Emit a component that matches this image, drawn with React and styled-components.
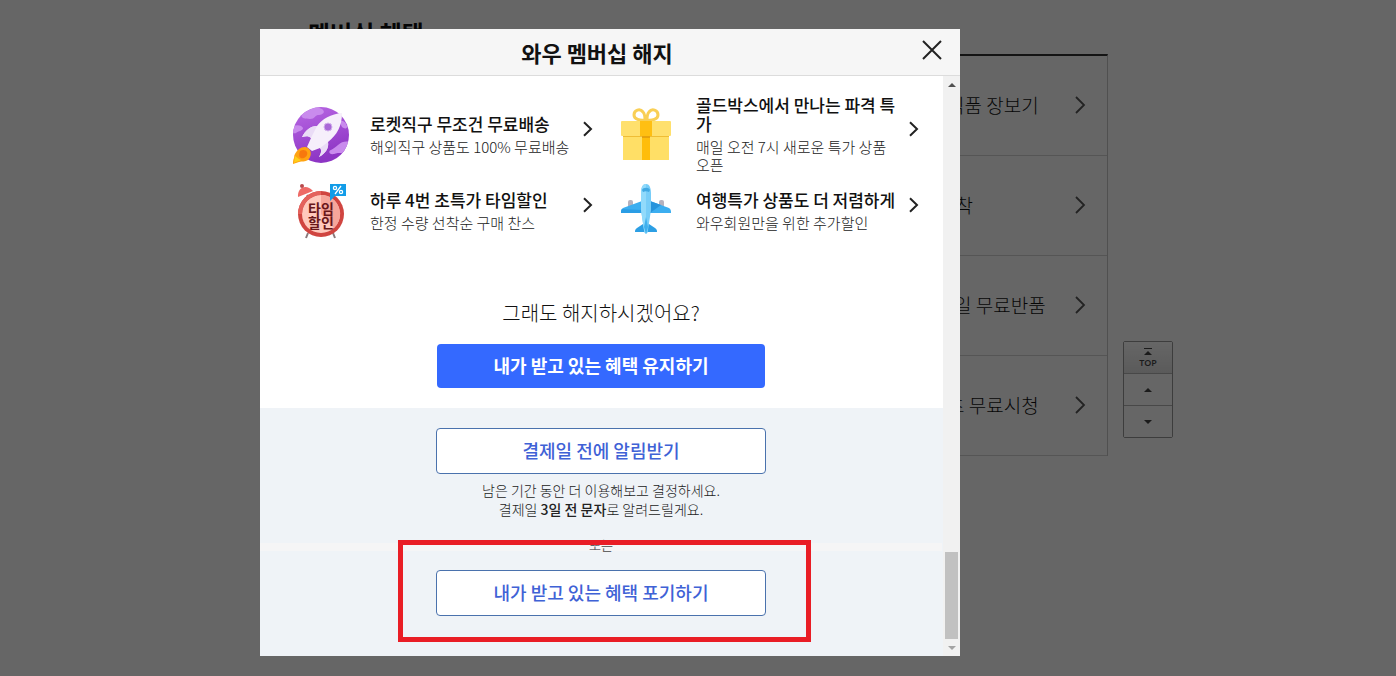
import styled, { createGlobalStyle } from 'styled-components';

const GlobalStyle = createGlobalStyle`
  * {
    box-sizing: border-box;
  }
  body {
    margin: 0;
    background-color: white;
    color: #111;
    font-family: 'Noto Sans CJK KR', 'Noto Sans', sans-serif;
  }
  button {
    font-family: inherit;
    cursor: pointer;
  }
  h1, h2, h3, p, ul {
    margin: 0;
    padding: 0;
  }
`;

const Page = styled.div`
  display: flex;
  justify-content: center;
  gap: 15px;
  padding-left: 85px;
`;
const Main = styled.main`
  width: 800px;
  padding-top: 14px;
`;
const PageTitle = styled.h1`
  height: 40px;
  font-size: 24px;
  line-height: 38px;
`;
const BenefitMenu = styled.ul`
  list-style: none;
  border-top: 2px solid #333;
  border-right: 1px solid #c8c8c8;
`;
const MenuItem = styled.li`
  height: 100px;
  border-bottom: 1px solid #d5d5d5;
`;
const MenuLink = styled.a`
  display: flex;
  align-items: center;
  justify-content: space-between;
  height: 100%;
  margin-left: 50%;
  padding: 0 19px 2px 113px;
  color: #111;
  font-size: 19px;
  font-weight: 300;
  text-decoration: none;
`;

const QuickNav = styled.nav`
  display: flex;
  flex-direction: column;
  align-self: flex-start;
  width: 50px;
  margin-top: 341px;
  border: 1px solid #999;
  border-radius: 2px;
`;
const QuickButton = styled.button`
  display: flex;
  flex-direction: column;
  align-items: center;
  justify-content: center;
  gap: 2px;
  height: 31px;
  padding: 0;
  border: none;
  background: ${({ $top }) =>
    $top ? 'linear-gradient(white, #e2e2e2)' : 'white'};
  color: #444;
  font-family: 'Open Sans', sans-serif;
  font-size: 9px;
  font-weight: 600;
  line-height: 11px;
  & + & {
    height: 32px;
    border-top: 1px solid #b4b4b4;
  }
`;

const Overlay = styled.div`
  position: fixed;
  inset: 0;
  display: flex;
  justify-content: center;
  align-items: flex-start;
  padding: 29px 176px 20px 0;
  background-color: rgba(0, 0, 0, 0.6);
`;
const Modal = styled.section`
  width: 700px;
  background-color: white;
`;
const ModalHeader = styled.header`
  display: flex;
  align-items: center;
  height: 47px;
  padding: 0 16px 0 14px;
  border-bottom: 1px solid #dcdcdc;
  background-color: #f6f6f6;
`;
const ModalTitle = styled.h2`
  flex: 1;
  text-align: center;
  font-size: 22px;
  line-height: 30px;
`;
const CloseButton = styled.button`
  display: flex;
  align-items: center;
  width: 24px;
  height: 32px;
  padding: 0 0 4px;
  border: none;
  background: none;
`;
const ModalBody = styled.div`
  display: flex;
`;
const Content = styled.div`
  flex: 1;
`;

const BenefitGrid = styled.ul`
  display: grid;
  grid-template-columns: 1fr 1fr;
  grid-auto-rows: minmax(74px, auto);
  padding: 19px 1px 0 30px;
  list-style: none;
`;
const Benefit = styled.a`
  display: flex;
  align-items: center;
  height: 100%;
  color: #111;
  text-decoration: none;
`;
const BenefitText = styled.div`
  width: 206px;
  margin: 0 6px 0 20px;
`;
const BenefitTitle = styled.h3`
  margin-bottom: 5px;
  font-size: 17px;
  font-weight: 500;
  line-height: 19px;
`;
const BenefitDesc = styled.p`
  color: #222;
  font-size: 15px;
  font-weight: 300;
  line-height: 18px;
`;
const ArrowBox = styled.span`
  display: flex;
  padding-bottom: 12px;
`;

const KeepSection = styled.div`
  display: flex;
  flex-direction: column;
  align-items: center;
  padding: 52px 1px 20px 0;
`;
const Question = styled.p`
  margin-bottom: 18px;
  font-size: 20px;
  font-weight: 300;
  line-height: 26px;
`;
const CancelSection = styled.div`
  display: flex;
  flex-direction: column;
  align-items: center;
  padding: 20px 1px 40px 0;
  background-color: #eff3f7;
`;
const ActionButton = styled.button`
  width: ${({ $primary }) => ($primary ? '328px' : '330px')};
  height: ${({ $primary }) => ($primary ? '44px' : '46px')};
  padding: 0 0 2px;
  border: ${({ $primary }) => ($primary ? 'none' : '1px solid #4a72ad')};
  border-radius: 4px;
  background-color: ${({ $primary }) => ($primary ? '#3469ff' : 'white')};
  color: ${({ $primary }) => ($primary ? 'white' : '#3f62d6')};
  font-size: 18px;
  font-weight: ${({ $primary }) => ($primary ? 700 : 500)};
`;
const Notice = styled.p`
  margin-top: 7px;
  color: #222;
  text-align: center;
  font-size: 14px;
  font-weight: 300;
  line-height: 19px;
  strong {
    font-weight: 500;
  }
`;
const Divider = styled.div`
  width: 100%;
  height: 8px;
  margin: 24px 0 19px;
  background-color: #f5f5f6;
  color: #666;
  text-align: center;
  font-size: 13px;
  line-height: 4px;
`;
const Highlighted = styled.div`
  position: relative;
  &::after {
    content: '';
    position: absolute;
    inset: -30px -45px -26px -38px;
    border: 5px solid #e91d25;
    pointer-events: none;
  }
`;

const Scrollbar = styled.div`
  display: flex;
  flex-direction: column;
  width: 17px;
  background-color: #f1f1f1;
`;
const ScrollButton = styled.button`
  display: flex;
  align-items: center;
  justify-content: center;
  height: 17px;
  padding: 0;
  border: none;
  background: none;
`;
const ScrollTrack = styled.div`
  display: flex;
  flex: 1;
  flex-direction: column;
  justify-content: flex-end;
  padding: 0 2px;
`;
const ScrollThumb = styled.div`
  height: 87px;
  background-color: #c1c1c1;
`;

const Triangle = styled.span`
  border: solid transparent;
  border-width: 0 4px 4px;
  border-bottom-color: ${({ $color }) => $color};
  transform: ${({ $down }) => ($down ? 'rotate(180deg)' : 'none')};
`;
const TopBar = styled.span`
  width: 8px;
  height: 1px;
  background-color: #444;
`;

function Chevron({ large }) {
  return large ? (
    <svg width="16" height="20" viewBox="0 0 16 20" fill="none">
      <path d="M4 2l8 8-8 8" stroke="#555" strokeWidth="1.8" />
    </svg>
  ) : (
    <svg width="12" height="16" viewBox="0 0 12 16" fill="none">
      <path d="M2 1.2L9 8l-7 6.8" stroke="#222" strokeWidth="2" />
    </svg>
  );
}

function RocketIcon() {
  return (
    <svg width="60" height="60" viewBox="0 0 60 60">
      <defs>
        <linearGradient id="planet" x1="0" y1="0" x2="0.3" y2="1">
          <stop offset="0" stopColor="#b968e4" />
          <stop offset="1" stopColor="#8d35c4" />
        </linearGradient>
        <clipPath id="planetClip">
          <circle cx="31" cy="30" r="28" />
        </clipPath>
      </defs>
      <circle cx="31" cy="30" r="28" fill="url(#planet)" />
      <g clipPath="url(#planetClip)" fill="#c98bed">
        <path d="M12 9c5-5 14-8 20-5 4 3 1 6-4 6-3 0-3 4-8 4-6 0-10-1-8-5z" />
        <path d="M2 22c4-3 10-2 11 1 0 3-5 3-7 5-2 1-5-1-4-6z" />
        <path d="M48 40c4-4 8-4 13-3l-4 9c-3 3-8 1-13 3-5 1-6-3-3-4 3-2 5-3 7-5z" />
        <path d="M49 16c4-1 7 1 8 5 1 3-3 3-5 1z" />
      </g>
      <path
        d="M52 8c-11 1-20 6-25 13-7 0-11 4-15 11 4-1 7-1 9 1l-4 9 5 4 8-3c2 2 1 6-1 9 7-4 10-9 9-15C47 30 52 21 52 8z"
        fill="#f6effb"
      />
      <path d="M27 21c-7 0-11 4-15 11 4-1 7-1 9 1z" fill="#eadcf6" />
      <path d="M38 37c1 6-2 11-9 15 2-3 3-7 1-9z" fill="#eadcf6" />
      <circle cx="38" cy="22" r="4" fill="#a968d8" stroke="#d3b3ec" />
      <path
        d="M9 44c3-2 7-3 10 0s2 8-1 11c-3 2-6 1-9 2-2 1-4 1-6 2 0-2 0-4 1-6 0-4 2-6 5-9z"
        fill="#ffa312"
      />
      <path d="M10 46c3-2 6-1 7 1 1 3-1 5-3 6-4 1-6-1-4-7z" fill="#f7780e" />
      <path d="M5 51c2 1 3 3 6 4-2 2-5 1-7 3z" fill="#ffd018" />
    </svg>
  );
}

function GiftIcon() {
  return (
    <svg width="60" height="60" viewBox="0 0 60 60">
      <g fill="none" stroke="#f9cf55" strokeWidth="3">
        <path d="M29 15c-5 1-11-1-11-5 0-5 6-7 9-3 2 2 2 5 2 8z" />
        <path d="M31 15c5 1 11-1 11-5 0-5-6-7-9-3-2 2-2 5-2 8z" />
      </g>
      <rect x="7" y="29" width="46" height="26" fill="#ffdf66" />
      <rect x="5" y="16" width="50" height="15" rx="1" fill="#ffe06d" />
      <rect x="7" y="31" width="46" height="1" fill="#efbd35" />
      <rect x="24" y="16" width="12" height="15" fill="#ffbf12" />
      <rect x="26" y="31" width="8" height="24" fill="#ffbd0b" />
      <rect x="26" y="31" width="8" height="2" fill="#e7a20b" />
    </svg>
  );
}

function AlarmIcon() {
  return (
    <svg width="60" height="60" viewBox="0 0 60 60">
      <path d="M18 52l-2 5M43 52l2 5M17 14l5 7" stroke="#8a7a7c" strokeWidth="2" />
      <path d="M8 16C7 7 16 2 23 10z" fill="#ee6a66" />
      <circle cx="12" cy="5" r="2" fill="#b94a4c" />
      <circle cx="31" cy="33" r="23" fill="#d04540" />
      <circle cx="31" cy="33" r="19" fill="#ffc9bd" />
      <path d="M31 14a19 19 0 0 1 13 33L31 33z" fill="#f6a69b" />
      <path d="M8 33a23 23 0 0 1 23-23v4a19 19 0 0 0-19 19z" fill="#e4625c" />
      <g fill="#68161a" fontSize="14" fontWeight="700" textAnchor="middle">
        <text x="31" y="33">타임</text>
        <text x="31" y="47">할인</text>
      </g>
      <path d="M40 3h16v12H45l-5 5z" fill="#129ce8" />
      <g fill="none" stroke="white" strokeWidth="1.3">
        <circle cx="45" cy="7" r="1.6" />
        <circle cx="51" cy="11" r="1.6" />
        <path d="M51 5l-6 8" />
      </g>
    </svg>
  );
}

function PlaneIcon() {
  return (
    <svg width="60" height="60" viewBox="0 0 60 60">
      <rect x="12" y="19" width="5" height="9" rx="2" fill="#b6b2be" />
      <rect x="43" y="19" width="5" height="9" rx="2" fill="#b6b2be" />
      <path d="M26 20L7 27c-2 1-2 3-2 5h21z" fill="#3caef0" />
      <path d="M34 20l19 7c2 1 2 3 2 5H34z" fill="#3caef0" />
      <path d="M34 20l11 4-11 8z" fill="#2794dc" />
      <path d="M5 32c0-2 0-3 1-4l20 1v3z" fill="#2a9de5" />
      <path d="M27 43l-6 4c-2 1-2 3-2 4h22c0-1 0-3-2-4l-6-4z" fill="#2c9fe4" />
      <path d="M30 3c-4 0-5 5-5 9v17l3 20c0 5 4 5 4 0l3-20V12c0-4-1-9-5-9z" fill="#77cdf8" />
      <path d="M30 3c-4 0-5 5-5 9v17l3 20c0 2 1 3 2 3z" fill="#91dafb" />
      <path d="M26 9c1-3 7-3 8 0l-1 2c-2-1-4-1-6 0z" fill="#41a9e3" />
      <path d="M30 36l-2 10 2 7 2-7z" fill="#3fb0ee" />
    </svg>
  );
}

const menus = [
  '로켓프레시 신선식품 장보기',
  '오늘 주문 내일 도착',
  '로켓배송 상품 30일 무료반품',
  '쿠팡플레이 콘텐츠 무료시청',
];

const benefits = [
  {
    icon: <RocketIcon />,
    title: '로켓직구 무조건 무료배송',
    desc: '해외직구 상품도 100% 무료배송',
  },
  {
    icon: <GiftIcon />,
    title: '골드박스에서 만나는 파격 특가',
    desc: '매일 오전 7시 새로운 특가 상품 오픈',
  },
  {
    icon: <AlarmIcon />,
    title: '하루 4번 초특가 타임할인',
    desc: '한정 수량 선착순 구매 찬스',
  },
  {
    icon: <PlaneIcon />,
    title: '여행특가 상품도 더 저렴하게',
    desc: '와우회원만을 위한 추가할인',
  },
];

function CancelModal() {
  return (
    <Modal role="dialog" aria-labelledby="modal-title">
      <ModalHeader>
        <ModalTitle id="modal-title">와우 멤버십 해지</ModalTitle>
        <CloseButton type="button" aria-label="닫기">
          <svg width="24" height="24" viewBox="0 0 24 24">
            <path d="M3 3l18 18M21 3L3 21" stroke="#222" strokeWidth="2" />
          </svg>
        </CloseButton>
      </ModalHeader>
      <ModalBody>
        <Content>
          <BenefitGrid>
            {benefits.map(({ icon, title, desc }) => (
              <li key={title}>
                <Benefit href="#">
                  {icon}
                  <BenefitText>
                    <BenefitTitle>{title}</BenefitTitle>
                    <BenefitDesc>{desc}</BenefitDesc>
                  </BenefitText>
                  <ArrowBox>
                    <Chevron />
                  </ArrowBox>
                </Benefit>
              </li>
            ))}
          </BenefitGrid>
          <KeepSection>
            <Question>그래도 해지하시겠어요?</Question>
            <ActionButton type="button" $primary>
              내가 받고 있는 혜택 유지하기
            </ActionButton>
          </KeepSection>
          <CancelSection>
            <ActionButton type="button">결제일 전에 알림받기</ActionButton>
            <Notice>
              남은 기간 동안 더 이용해보고 결정하세요.
              <br />
              결제일 <strong>3일 전 문자</strong>로 알려드릴게요.
            </Notice>
            <Divider>또는</Divider>
            <Highlighted>
              <ActionButton type="button">
                내가 받고 있는 혜택 포기하기
              </ActionButton>
            </Highlighted>
          </CancelSection>
        </Content>
        <Scrollbar>
          <ScrollButton type="button" aria-label="위로 스크롤">
            <Triangle $color="#505050" />
          </ScrollButton>
          <ScrollTrack>
            <ScrollThumb />
          </ScrollTrack>
          <ScrollButton type="button" aria-label="아래로 스크롤">
            <Triangle $color="#a3a3a3" $down />
          </ScrollButton>
        </Scrollbar>
      </ModalBody>
    </Modal>
  );
}

function App() {
  return (
    <>
      <GlobalStyle />
      <Page>
        <Main>
          <PageTitle>멤버십 혜택</PageTitle>
          <BenefitMenu>
            {menus.map((menu) => (
              <MenuItem key={menu}>
                <MenuLink href="#">
                  {menu}
                  <Chevron large />
                </MenuLink>
              </MenuItem>
            ))}
          </BenefitMenu>
        </Main>
        <QuickNav>
          <QuickButton type="button" $top>
            <TopBar />
            <Triangle $color="#444" />
            TOP
          </QuickButton>
          <QuickButton type="button" aria-label="위로">
            <Triangle $color="#444" />
          </QuickButton>
          <QuickButton type="button" aria-label="아래로">
            <Triangle $color="#444" $down />
          </QuickButton>
        </QuickNav>
      </Page>
      <Overlay>
        <CancelModal />
      </Overlay>
    </>
  );
}
export default App;
